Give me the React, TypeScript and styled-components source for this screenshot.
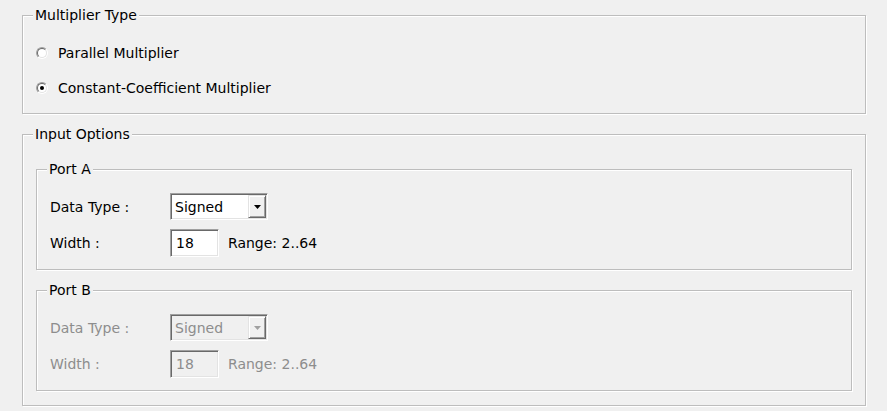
import React from "react";
import styled, { createGlobalStyle } from "styled-components";

const GlobalStyle = createGlobalStyle`
  html, body { margin: 0; padding: 0; background: #f0f0f0; }
  body {
    font-family: "DejaVu Sans", Tahoma, sans-serif;
    font-size: 14px;
    letter-spacing: 0;
    color: #000;
  }
`;

const Page = styled.div`
  width: 887px;
  height: 411px;
  box-sizing: border-box;
  padding: 15px 21px 0 22px;
  display: flex;
  flex-direction: column;
  gap: 20px;
  overflow: hidden;
`;

const Group = styled.div<{ $pt: number; $pb: number; $px: number; $gap: number }>`
  position: relative;
  border: 1px solid #bdbdbd;
  box-shadow: inset 1px 1px 0 #fff, 1px 1px 0 #fff;
  padding: ${(p) => p.$pt}px ${(p) => p.$px}px ${(p) => p.$pb}px;
  display: flex;
  flex-direction: column;
  gap: ${(p) => p.$gap}px;
`;

const Legend = styled.span`
  position: absolute;
  top: -9px;
  left: 10px;
  padding: 0 2px;
  background: #f0f0f0;
  line-height: 16px;
  color: #000;
  white-space: nowrap;
`;

const RadioRow = styled.label`
  display: flex;
  align-items: center;
  gap: 10px;
  height: 20px;
`;

const RadioOuter = styled.span`
  width: 12px;
  height: 12px;
  box-sizing: border-box;
  border-radius: 50%;
  border: 1px solid;
  border-color: #a0a0a0 #fff #fff #a0a0a0;
  display: flex;
`;

const RadioInner = styled.span`
  flex: 1;
  border-radius: 50%;
  border: 1px solid;
  border-color: #696969 #e3e3e3 #e3e3e3 #696969;
  background: #fff;
  display: flex;
  align-items: center;
  justify-content: center;
`;

const RadioDot = styled.span`
  width: 4px;
  height: 4px;
  border-radius: 50%;
  background: #000;
`;

const FormRow = styled.div`
  display: flex;
  align-items: center;
`;

const FieldLabel = styled.span<{ $disabled?: boolean }>`
  width: 120px;
  color: ${(p) => (p.$disabled ? "#8d8d8d" : "#000")};
`;

const sunken = `
  box-sizing: border-box;
  border: 1px solid;
  border-color: #a0a0a0 #fff #fff #a0a0a0;
  box-shadow: inset 1px 1px 0 #696969, inset -1px -1px 0 #e3e3e3;
`;

const Combo = styled.div<{ $disabled?: boolean }>`
  ${sunken}
  width: 98px;
  height: 27px;
  padding: 1px;
  display: flex;
  background: ${(p) => (p.$disabled ? "#f0f0f0" : "#fff")};
  color: ${(p) => (p.$disabled ? "#8d8d8d" : "#000")};
`;

const ComboValue = styled.span`
  flex: 1;
  padding-left: 3px;
  display: flex;
  align-items: center;
`;

const ComboButton = styled.span`
  width: 18px;
  box-sizing: border-box;
  background: #f0f0f0;
  border: 1px solid;
  border-color: #e3e3e3 #696969 #696969 #e3e3e3;
  box-shadow: inset 1px 1px 0 #fff, inset -1px -1px 0 #a0a0a0;
  display: flex;
  align-items: center;
  justify-content: center;
`;

const TextBox = styled.input<{ $disabled?: boolean }>`
  ${sunken}
  width: 49px;
  height: 28px;
  margin: 0;
  padding: 0 0 0 5px;
  font: inherit;
  letter-spacing: inherit;
  outline: none;
  background: ${(p) => (p.$disabled ? "#f0f0f0" : "#fff")};
  color: ${(p) => (p.$disabled ? "#8d8d8d" : "#000")};
  &:disabled {
    color: #8d8d8d;
    -webkit-text-fill-color: #8d8d8d;
    opacity: 1;
  }
`;

const RangeText = styled.span<{ $disabled?: boolean }>`
  margin-left: 9px;
  color: ${(p) => (p.$disabled ? "#8d8d8d" : "#000")};
`;

function Radio({ checked, label }: { checked: boolean; label: string }) {
  return (
    <RadioRow>
      <RadioOuter>
        <RadioInner>{checked && <RadioDot />}</RadioInner>
      </RadioOuter>
      <span>{label}</span>
    </RadioRow>
  );
}

function Port({ name, disabled }: { name: string; disabled?: boolean }) {
  return (
    <Group $pt={23} $pb={12} $px={13} $gap={9}>
      <Legend>{name}</Legend>
      <FormRow>
        <FieldLabel $disabled={disabled}>Data Type :</FieldLabel>
        <Combo $disabled={disabled}>
          <ComboValue>Signed</ComboValue>
          <ComboButton>
            <svg width="7" height="4" viewBox="0 0 7 4">
              <polygon points="0,0 7,0 3.5,4" fill={disabled ? "#a0a0a0" : "#000"} />
            </svg>
          </ComboButton>
        </Combo>
      </FormRow>
      <FormRow>
        <FieldLabel $disabled={disabled}>Width :</FieldLabel>
        <TextBox $disabled={disabled} disabled={disabled} defaultValue="18" />
        <RangeText $disabled={disabled}>Range: 2..64</RangeText>
      </FormRow>
    </Group>
  );
}

export default function App() {
  return (
    <>
      <GlobalStyle />
      <Page>
        <Group $pt={27} $pb={15} $px={13} $gap={15}>
          <Legend>Multiplier Type</Legend>
          <Radio checked={false} label="Parallel Multiplier" />
          <Radio checked={true} label="Constant-Coefficient Multiplier" />
        </Group>
        <Group $pt={34} $pb={14} $px={13} $gap={20}>
          <Legend>Input Options</Legend>
          <Port name="Port A" />
          <Port name="Port B" disabled />
        </Group>
      </Page>
    </>
  );
}
